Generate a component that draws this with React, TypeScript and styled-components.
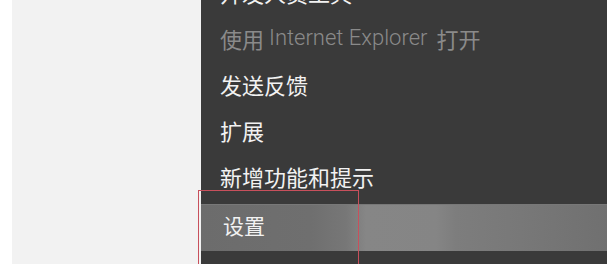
import React from 'react';
import styled, {createGlobalStyle} from 'styled-components';

const GlobalStyle = createGlobalStyle`
    html, body {
        margin: 0;
        padding: 0;
        background: #ffffff;
    }
    body {
        font-family: "Noto Sans CJK SC", "Noto Sans", sans-serif;
    }
`;

const Screen = styled.div`
    position: relative;
    display: flex;
    width: 607px;
    height: 264px;
    overflow: hidden;
    background: #ffffff;
`;

const Margin = styled.div`
    flex: 0 0 12px;
    background: #ffffff;
`;

const Page = styled.div`
    flex: 0 0 189px;
    background: #f2f2f2;
`;

const Menu = styled.ul`
    flex: 1 1 auto;
    display: flex;
    flex-direction: column;
    margin: -29px 0 0;
    padding: 0;
    list-style: none;
    background: #3a3a3a;
`;

const MenuItem = styled.li<{$disabled?: boolean; $active?: boolean}>`
    flex: 0 0 ${p => (p.$active ? '47px' : '46px')};
    box-sizing: border-box;
    display: flex;
    align-items: center;
    margin-top: ${p => (p.$active ? '3px' : '0')};
    padding: 0 0 4px ${p => (p.$active ? '22px' : '19px')};
    font-size: ${p => (p.$active ? '21px' : '22px')};
    line-height: 1;
    white-space: nowrap;
    color: ${p => (p.$disabled ? '#8a8a8a' : '#f2f2f2')};
    background: ${p =>
        p.$active
            ? 'linear-gradient(to right, #6c6c6c 0, #6f6f6f 110px, #777777 145px, #868686 165px, #858585 235px, #7d7d7d 255px, #787878 320px, #707070 406px)'
            : 'transparent'};
    box-shadow: ${p => (p.$active ? 'inset 0 1px 0 #787878' : 'none')};
`;

const Latin = styled.span`
    margin: 0 9px 0 5px;
    font-family: Roboto, "Noto Sans", sans-serif;
    font-size: 22px;
    font-weight: 300;
`;

const Annotation = styled.div`
    position: absolute;
    left: 198px;
    top: 190px;
    width: 159px;
    height: 90px;
    border: 1px solid #c8505c;
    pointer-events: none;
`;

const items = [
    {label: '开发人员工具'},
    {label: ['使用', 'Internet Explorer', '打开'], disabled: true},
    {label: '发送反馈'},
    {label: '扩展'},
    {label: '新增功能和提示'},
    {label: '设置', active: true},
    {label: ''},
];

export default function App() {
    return (
        <Screen>
            <GlobalStyle />
            <Margin />
            <Page />
            <Menu>
                {items.map((item, i) => (
                    <MenuItem key={i} $disabled={item.disabled} $active={item.active}>
                        {Array.isArray(item.label) ? (
                            <>
                                {item.label[0]}
                                <Latin>{item.label[1]}</Latin>
                                {item.label[2]}
                            </>
                        ) : (
                            item.label
                        )}
                    </MenuItem>
                ))}
            </Menu>
            <Annotation />
        </Screen>
    );
}
